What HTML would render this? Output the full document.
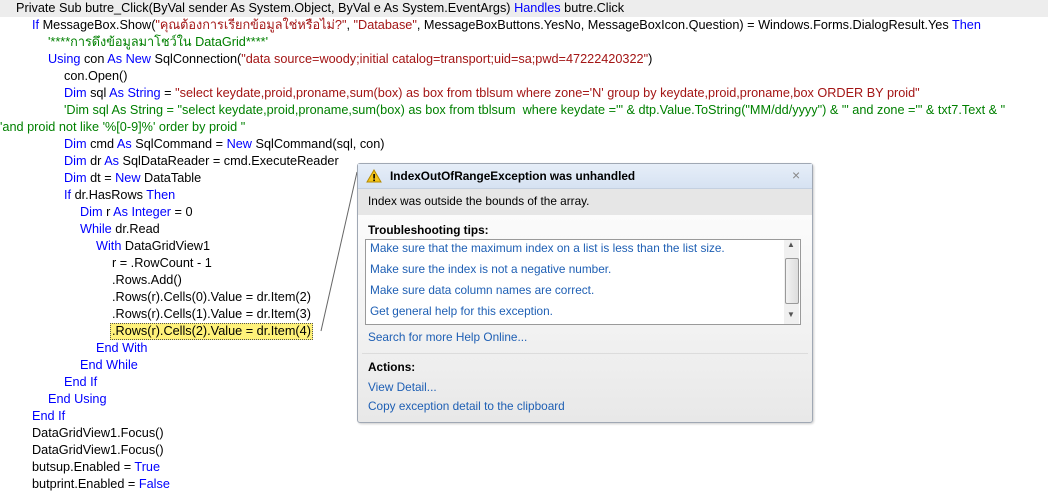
<!DOCTYPE html>
<html><head><meta charset="utf-8"><style>
body{margin:0;width:1048px;height:486px;overflow:hidden;background:#fff;font-family:"Liberation Sans","Noto Sans CJK SC",sans-serif;font-size:12.7px;color:#000;position:relative}
.l{position:absolute;height:17px;line-height:17px;white-space:pre}
.k{color:#0000ff}.s{color:#a31515}.c{color:#008000}
#dlg{position:absolute;left:357px;top:163px;width:454px;height:258px;border:1px solid #a0a8b4;border-radius:3px;background:linear-gradient(#fff,#f3f3f3 60%,#e8e8e8);box-shadow:1px 1px 2px rgba(0,0,0,.2)}
.d{position:absolute;white-space:pre;font-size:11.8px}
.a{color:#1e5fb4}
</style></head><body>
<div class="l" style="left:0;top:0;width:1048px;background:#ededed"></div>
<div class="l" style="left:16px;top:0">Private Sub butre_Click(ByVal sender As System.Object, ByVal e As System.EventArgs) <span class="k">Handles</span> butre.Click</div>
<div class="l" style="left:32px;top:17px"><span class="k">If</span> MessageBox.Show(<span class="s">"คุณต้องการเรียกข้อมูลใช่หรือไม่?"</span>, <span class="s">"Database"</span>, MessageBoxButtons.YesNo, MessageBoxIcon.Question) = Windows.Forms.DialogResult.Yes <span class="k">Then</span></div>
<div class="l c" style="left:48px;top:34px">'****การดึงข้อมูลมาโชว์ใน DataGrid****'</div>
<div class="l" style="left:48px;top:51px"><span class="k">Using</span> con <span class="k">As New</span> SqlConnection(<span class="s">"data source=woody;initial catalog=transport;uid=sa;pwd=47222420322"</span>)</div>
<div class="l" style="left:64px;top:68px">con.Open()</div>
<div class="l" style="left:64px;top:85px"><span class="k">Dim</span> sql <span class="k">As String</span> = <span class="s">"select keydate,proid,proname,sum(box) as box from tblsum where zone='N' group by keydate,proid,proname,box ORDER BY proid"</span></div>
<div class="l c" style="left:64px;top:102px">'Dim sql As String = "select keydate,proid,proname,sum(box) as box from tblsum  where keydate ='" &amp; dtp.Value.ToString("MM/dd/yyyy") &amp; "' and zone ='" &amp; txt7.Text &amp; "</div>
<div class="l c" style="left:0;top:119px">'and proid not like '%[0-9]%' order by proid "</div>
<div class="l" style="left:64px;top:136px"><span class="k">Dim</span> cmd <span class="k">As</span> SqlCommand = <span class="k">New</span> SqlCommand(sql, con)</div>
<div class="l" style="left:64px;top:153px"><span class="k">Dim</span> dr <span class="k">As</span> SqlDataReader = cmd.ExecuteReader</div>
<div class="l" style="left:64px;top:170px"><span class="k">Dim</span> dt = <span class="k">New</span> DataTable</div>
<div class="l" style="left:64px;top:187px"><span class="k">If</span> dr.HasRows <span class="k">Then</span></div>
<div class="l" style="left:80px;top:204px"><span class="k">Dim</span> r <span class="k">As Integer</span> = 0</div>
<div class="l" style="left:80px;top:221px"><span class="k">While</span> dr.Read</div>
<div class="l" style="left:96px;top:238px"><span class="k">With</span> DataGridView1</div>
<div class="l" style="left:112px;top:255px">r = .RowCount - 1</div>
<div class="l" style="left:112px;top:272px">.Rows.Add()</div>
<div class="l" style="left:112px;top:289px">.Rows(r).Cells(0).Value = dr.Item(2)</div>
<div class="l" style="left:112px;top:306px">.Rows(r).Cells(1).Value = dr.Item(3)</div>
<div class="l" style="left:110px;top:323px;height:15px;line-height:15px;padding:0 1px;background:#fff27a;border:1px dotted #555">.Rows(r).Cells(2).Value = dr.Item(4)</div>
<div class="l k" style="left:96px;top:340px">End With</div>
<div class="l k" style="left:80px;top:357px">End While</div>
<div class="l k" style="left:64px;top:374px">End If</div>
<div class="l k" style="left:48px;top:391px">End Using</div>
<div class="l k" style="left:32px;top:408px">End If</div>
<div class="l" style="left:32px;top:425px">DataGridView1.Focus()</div>
<div class="l" style="left:32px;top:442px">DataGridView1.Focus()</div>
<div class="l" style="left:32px;top:459px">butsup.Enabled = <span class="k">True</span></div>
<div class="l" style="left:32px;top:476px">butprint.Enabled = <span class="k">False</span></div>
<svg style="position:absolute;left:0;top:0" width="1048" height="486"><line x1="357" y1="172" x2="321" y2="331" stroke="#666" stroke-width="1"/></svg>
<div id="dlg">
<div style="position:absolute;left:0;top:0;width:454px;height:24px;background:linear-gradient(#e6eef8,#d6e2f2);border-bottom:1px solid #c4d0e0"></div>
<svg style="position:absolute;left:8px;top:5px" width="16" height="14"><path d="M8 1L15 13H1Z" fill="#f5c518" stroke="#b58a00"/><rect x="7.3" y="5" width="1.6" height="4.5" fill="#000"/><rect x="7.3" y="10.5" width="1.6" height="1.6" fill="#000"/></svg>
<div class="d" style="left:32px;top:5px;font-weight:bold">IndexOutOfRangeException was unhandled</div>
<div class="d" style="left:434px;top:3px;color:#888;font-size:14px">×</div>
<div style="position:absolute;left:0;top:25px;width:454px;height:26px;background:#e6e6e6"></div>
<div class="d" style="left:10px;top:30px">Index was outside the bounds of the array.</div>
<div class="d" style="left:10px;top:59px;font-weight:bold">Troubleshooting tips:</div>
<div style="position:absolute;left:7px;top:75px;width:434px;height:84px;border:1px solid #9a9a9a;background:#fff"></div>
<div style="position:absolute;left:426px;top:76px;width:15px;height:84px;background:#f0f0f0"></div>
<div style="position:absolute;left:427px;top:94px;width:12px;height:44px;border:1px solid #999;border-radius:2px;background:linear-gradient(90deg,#f2f2f2,#ddd)"></div>
<div class="d" style="left:429px;top:76px;font-size:8px;color:#555">▲</div>
<div class="d" style="left:429px;top:146px;font-size:8px;color:#555">▼</div>
<div class="d a" style="left:12px;top:77px">Make sure that the maximum index on a list is less than the list size.</div>
<div class="d a" style="left:12px;top:98px">Make sure the index is not a negative number.</div>
<div class="d a" style="left:12px;top:119px">Make sure data column names are correct.</div>
<div class="d a" style="left:12px;top:140px">Get general help for this exception.</div>
<div class="d a" style="left:10px;top:166px">Search for more Help Online...</div>
<div style="position:absolute;left:4px;top:189px;width:446px;height:1px;background:#dcdcdc"></div>
<div class="d" style="left:10px;top:196px;font-weight:bold">Actions:</div>
<div class="d a" style="left:10px;top:216px">View Detail...</div>
<div class="d a" style="left:10px;top:235px">Copy exception detail to the clipboard</div>
</div>
</body></html>
